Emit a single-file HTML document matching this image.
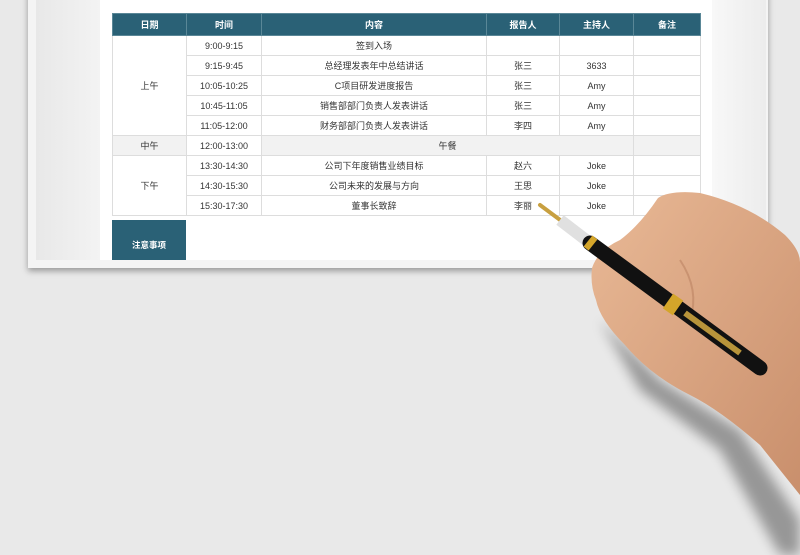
<!DOCTYPE html>
<html><head><meta charset="utf-8"><style>
body{margin:0;width:800px;height:555px;background:#e9e9e9;position:relative;overflow:hidden;font-family:"Liberation Sans","Noto Sans CJK SC",sans-serif}
.paper{position:absolute;left:28px;top:-10px;width:740px;height:278px;background:#f4f4f4;box-shadow:0 3px 6px rgba(0,0,0,.35)}
.lstrip{position:absolute;left:36px;top:0;width:64px;height:260px;background:linear-gradient(90deg,#e8e8e8,#f3f3f3)}
.rstrip{position:absolute;left:712px;top:0;width:54px;height:268px;background:linear-gradient(90deg,#f8f8f8,#ececec)}
.page{position:absolute;left:100px;top:0;width:612px;height:260px;background:#fff}
table{position:absolute;left:112px;top:13px;width:588px;table-layout:fixed;border-collapse:collapse;font-size:9px;color:#333}
td{border:1px solid #ddd;text-align:center;height:19px;padding:0}
th{background:#2a6176;color:#fff;font-weight:bold;height:21px;border:1px solid #5a8797;font-size:9px;padding:0}
.g td.gg{background:#f2f2f2}
.note{position:absolute;left:112px;top:220px;width:74px;height:40px;background:#2a6176;color:#fff;font-size:8.5px;font-weight:bold;text-align:center;line-height:50px}
</style></head><body>
<div class="paper"></div>
<div class="lstrip"></div>
<div class="rstrip"></div>
<div class="page"></div>
<table>
<colgroup><col style="width:74px"><col style="width:75px"><col style="width:225px"><col style="width:73px"><col style="width:74px"><col style="width:67px"></colgroup>
<tr><th>日期</th><th>时间</th><th>内容</th><th>报告人</th><th>主持人</th><th>备注</th></tr>
<tr><td rowspan="5">上午</td><td>9:00-9:15</td><td>签到入场</td><td></td><td></td><td></td></tr>
<tr><td>9:15-9:45</td><td>总经理发表年中总结讲话</td><td>张三</td><td>3633</td><td></td></tr>
<tr><td>10:05-10:25</td><td>C项目研发进度报告</td><td>张三</td><td>Amy</td><td></td></tr>
<tr><td>10:45-11:05</td><td>销售部部门负责人发表讲话</td><td>张三</td><td>Amy</td><td></td></tr>
<tr><td>11:05-12:00</td><td>财务部部门负责人发表讲话</td><td>李四</td><td>Amy</td><td></td></tr>
<tr class="g"><td class="gg">中午</td><td>12:00-13:00</td><td class="gg" colspan="3">午餐</td><td class="gg"></td></tr>
<tr><td rowspan="3">下午</td><td>13:30-14:30</td><td>公司下年度销售业绩目标</td><td>赵六</td><td>Joke</td><td></td></tr>
<tr><td>14:30-15:30</td><td>公司未来的发展与方向</td><td>王思</td><td>Joke</td><td></td></tr>
<tr><td>15:30-17:30</td><td>董事长致辞</td><td>李丽</td><td>Joke</td><td></td></tr>
</table>
<div class="note">注意事项</div>
<svg width="800" height="555" style="position:absolute;left:0;top:0">
<defs><linearGradient id="sk" x1="0" y1="0" x2="1" y2="1"><stop offset="0" stop-color="#e9b996"/><stop offset="1" stop-color="#c98f6c"/></linearGradient>
<filter id="bl"><feGaussianBlur stdDeviation="6"/></filter></defs>
<path d="M600,320 L660,380 L740,430 L800,520 L800,555 L780,555 L720,450 L640,390 Z" fill="#000" opacity=".35" filter="url(#bl)"/>
<path d="M592,268 Q598,250 620,240 Q640,225 658,198 Q670,190 700,193 Q750,205 785,235 Q800,250 800,262 L800,495 Q780,470 760,445 Q720,410 690,395 Q650,375 625,345 Q600,320 596,300 Q590,285 592,268 Z" fill="url(#sk)"/>
<path d="M680,260 Q700,290 690,320" stroke="#b57c5c" stroke-width="2" fill="none" opacity=".5"/>
<line x1="540" y1="205" x2="583" y2="237" stroke="#c8a040" stroke-width="4" stroke-linecap="round"/>
<line x1="560" y1="220" x2="590" y2="243" stroke="#e0e0e0" stroke-width="12"/>
<line x1="590" y1="243" x2="760" y2="368" stroke="#111" stroke-width="15" stroke-linecap="round"/>
<line x1="668" y1="301" x2="678" y2="308" stroke="#d4a52a" stroke-width="18"/>
<line x1="685" y1="313" x2="740" y2="353" stroke="#b8943a" stroke-width="6"/>
<line x1="588" y1="241" x2="593" y2="245" stroke="#d4a52a" stroke-width="14"/>
</svg>
</body></html>
